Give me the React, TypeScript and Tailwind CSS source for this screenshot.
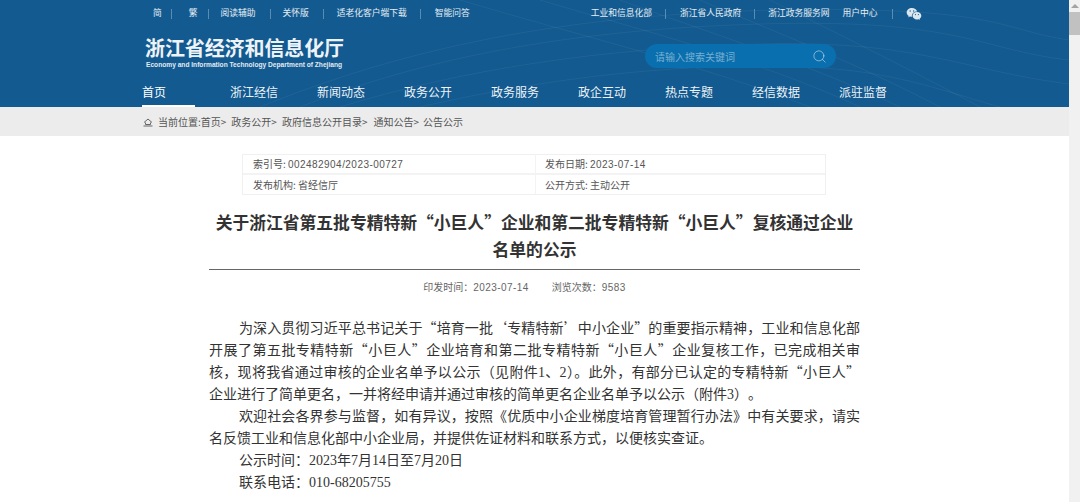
import React from "react";
import { Search } from "lucide-react";
import { RiWechatFill } from "react-icons/ri";

const navItems = ["浙江经信", "新闻动态", "政务公开", "政务服务", "政企互动", "热点专题", "经信数据", "派驻监督"];

const Divider = ({ className }: { className: string }) => (
  <span className={`h-[10px] w-px bg-white/30 ${className}`} />
);

// digits in the meta rows run a little wider than the font's own
const Num = ({ children }: { children: React.ReactNode }) => (
  <span className="font-['Liberation_Sans',sans-serif] tracking-[0.45px]">{children}</span>
);

// digits in the article body are set in a serif
const Serif = ({ children }: { children: React.ReactNode }) => (
  <span className="font-['Liberation_Serif',serif] leading-[0]">{children}</span>
);

const App: React.FC = () => {
  return (
    <div className="flex h-[502px] w-[1080px] overflow-hidden bg-white font-['Noto_Sans_CJK_SC','Liberation_Sans',sans-serif] text-[#333]">
      <div className="w-[1069px] shrink-0">
        {/* Header */}
        <div className="relative h-[107px] overflow-hidden bg-[#135a90] text-white">
          {/* wave lines in the header background */}
          <svg className="absolute inset-0" width="1069" height="107" fill="none" stroke="#ffffff" strokeOpacity="0.05">
            <path d="M300 107C420 60 560 30 760 24S980 50 1069 60" />
            <path d="M260 107C400 50 560 14 780 10S1000 30 1069 40" />
            <path d="M340 107C460 70 600 48 760 44S960 70 1069 84" />
            <path d="M420 107C520 84 640 66 760 66S920 84 1000 107" />
            <path d="M540 0C640 30 760 60 860 107" />
            <path d="M620 0C700 30 800 60 900 107" />
            <path d="M700 0C770 30 850 60 940 107" />
            <path d="M460 0C580 36 700 64 810 107" />
            <path d="M770 0C830 30 900 64 980 107" />
          </svg>

          {/* Top links */}
          <div className="relative flex h-[27px] items-center text-[8.75px] leading-none text-white/90">
            <span className="ml-[153px]">简</span>
            <Divider className="ml-[9px]" />
            <span className="ml-[17px]">繁</span>
            <Divider className="ml-[10px]" />
            <span className="ml-[12px]">阅读辅助</span>
            <Divider className="ml-[14px]" />
            <span className="ml-[12px]">关怀版</span>
            <Divider className="ml-[14px]" />
            <span className="ml-[13px]">适老化客户端下载</span>
            <Divider className="ml-[13px]" />
            <span className="ml-[14px]">智能问答</span>

            <span className="ml-[121px]">工业和信息化部</span>
            <Divider className="ml-[13px]" />
            <span className="ml-[14px]">浙江省人民政府</span>
            <Divider className="ml-[13px]" />
            <span className="ml-[13px]">浙江政务服务网</span>
            <span className="ml-[13px]">用户中心</span>
            <Divider className="ml-[14px]" />
            <RiWechatFill className="ml-[13px] text-[16px] text-[#dbe6ef]" />
          </div>

          {/* Logo and search */}
          <div className="relative flex h-[48px] items-start pl-[146px]">
            <div className="w-[499px] pt-[10px]">
              <div className="-ml-px text-[20px] font-bold leading-[22px] tracking-[-0.1px] text-[#eef3f7]">浙江省经济和信息化厅</div>
              <div className="mt-[2px] font-['Liberation_Sans',sans-serif] text-[6.63px] font-bold leading-[8px] text-[#e2eaf1]">
                Economy and Information Technology Department of Zhejiang
              </div>
            </div>
            <div className="mt-[17px] flex h-[24px] w-[191px] items-center justify-between rounded-full bg-[#0a6fae] pl-[10px] pr-[9px]">
              <span className="text-[10px] text-white/45">请输入搜索关键词</span>
              <Search size={15} strokeWidth={1.5} className="text-white/50" />
            </div>
          </div>

          {/* Nav */}
          <div className="relative flex h-[32px] pl-[142px] text-[12px]">
            <div className="h-[32px] w-[53px] border-b-[2px] border-white pt-[8px] leading-[18px]">首页</div>
            <div className="ml-[35px] flex gap-[39px] pt-[8px] leading-[18px] text-white/95">
              {navItems.map((item) => (
                <span key={item} className="w-[48px] whitespace-nowrap">
                  {item}
                </span>
              ))}
            </div>
          </div>
        </div>

        {/* Breadcrumb */}
        <div className="flex h-[29px] items-center bg-[#ececec] pl-[143px] text-[10px] text-[#555]">
          <svg width="10" height="10" viewBox="0 0 10 10" fill="none" stroke="#666" strokeWidth="1">
            <path d="M1 5.5L5 2l4 3.5" />
            <path d="M2.5 5.5V7.5h5V5.5" />
            <path d="M0.5 9h9" />
          </svg>
          <span className="ml-[5px]">当前位置:首页&gt;</span>
          <span className="ml-[5px]">政务公开&gt;</span>
          <span className="ml-[5px]">政府信息公开目录&gt;</span>
          <span className="ml-[6px]">通知公告&gt;</span>
          <span className="ml-[4px]">公告公示</span>
        </div>

        {/* Meta table */}
        <div className="ml-[242px] mt-[18px] w-[584px] border border-[#f0f0f0] text-[10px] text-[#555]">
          <div className="flex h-[20px] items-center border-b-2 border-[#f3f3f3]">
            <span className="w-[293px] border-r border-[#f3f3f3] pl-[10px] leading-[19px]">
              索引号: <Num>002482904/2023-00727</Num>
            </span>
            <span className="pl-[9px]">
              发布日期: <Num>2023-07-14</Num>
            </span>
          </div>
          <div className="flex h-[19px] items-center">
            <span className="w-[293px] border-r border-[#f3f3f3] pl-[10px] leading-[19px]">发布机构: 省经信厅</span>
            <span className="pl-[9px]">公开方式: 主动公开</span>
          </div>
        </div>

        {/* Article */}
        <div className="ml-[209px] w-[651px]">
          <h1 className="mt-[14px] text-center text-[16.8px] font-bold leading-[27px] text-[#333]">
            关于浙江省第五批专精特新“小巨人”企业和第二批专精特新“小巨人”复核通过企业名单的公示
          </h1>
          <div className="mt-[6px] h-px bg-[#666]" />
          <div className="mt-[10px] flex justify-center gap-[23px] pr-[20px] text-[10px] leading-[14px] text-[#666]">
            <span>
              印发时间&#xFF1A;<Num>2023-07-14</Num>
            </span>
            <span>
              浏览次数&#xFF1A;<Num>9583</Num>
            </span>
          </div>
          <div className="mt-[21px] text-[14px] leading-[22px] text-[#333]">
            <p className="text-justify indent-[30px]">
              为深入贯彻习近平总书记关于“培育一批‘专精特新’中小企业”的重要指示精神&#xFF0C;工业和信息化部开展了第五批专精特新“小巨人”企业培育和第二批专精特新“小巨人”企业复核工作&#xFF0C;已完成相关审核&#xFF0C;现将我省通过审核的企业名单予以公示&#xFF08;见附件<Serif>1</Serif>、<Serif>2</Serif>&#xFF09;。此外&#xFF0C;有部分已认定的专精特新“小巨人”<wbr /><span className="whitespace-nowrap">企业</span>进行了简单更名&#xFF0C;一并将经申请并通过审核的简单更名企业名单予以公示&#xFF08;附件<Serif>3</Serif><span className="[text-spacing-trim:space-all]">&#xFF09;。</span>
            </p>
            <p className="text-justify indent-[30px]">
              欢迎社会各界参与监督&#xFF0C;如有异议&#xFF0C;按照《优质中小企业梯度培育管理暂行办法》中有关要求&#xFF0C;请实名反馈工业和信息化部中小企业局&#xFF0C;并提供佐证材料和联系方式&#xFF0C;以便核实查证。
            </p>
            <p className="indent-[30px]">
              公示时间&#xFF1A;<Serif>2023</Serif>年<Serif>7</Serif>月<Serif>14</Serif>日至<Serif>7</Serif>月<Serif>20</Serif>日
            </p>
            <p className="indent-[30px]">
              联系电话&#xFF1A;<Serif>010-68205755</Serif>
            </p>
          </div>
        </div>
      </div>

      {/* Scrollbar */}
      <div className="flex w-[11px] shrink-0 flex-col items-center bg-[#f1f1f1]">
        <div className="mt-[4px] h-0 w-0 border-x-[4px] border-b-[4px] border-x-transparent border-b-[#a3a3a3]" />
        <div className="mt-[4px] h-[23px] w-full bg-[#c1c1c1]" />
      </div>
    </div>
  );
};

export default App;
